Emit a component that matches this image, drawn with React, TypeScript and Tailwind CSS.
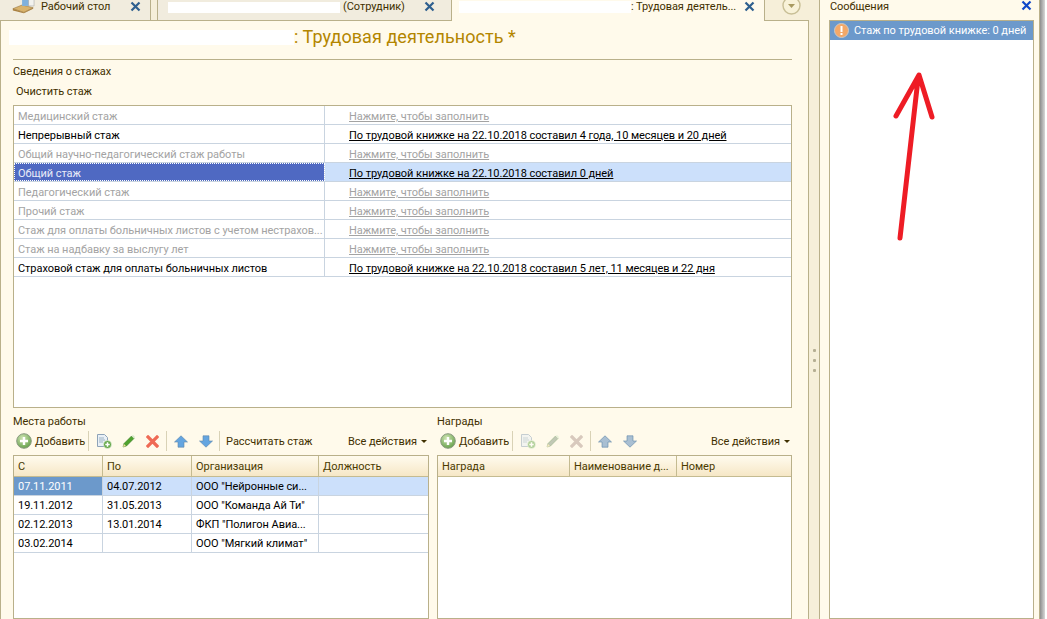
import React from "react";

const Plus = () => (
  <svg width="16" height="16" viewBox="0 0 16 16" className="shrink-0">
    <defs>
      <radialGradient id="pg" cx="0.4" cy="0.3" r="0.8">
        <stop offset="0" stopColor="#cfe5b4" />
        <stop offset="1" stopColor="#5c9a40" />
      </radialGradient>
    </defs>
    <circle cx="8" cy="8" r="7.3" fill="url(#pg)" stroke="#8a9a80" />
    <path d="M8 4v8M4 8h8" stroke="#fff" strokeWidth="2.4" />
  </svg>
);
const DocAdd = ({ o = 1 }: { o?: number }) => (
  <svg width="16" height="16" viewBox="0 0 16 16" opacity={o} className="shrink-0">
    <path d="M1.5 1.5h7l3 3v9h-10z" fill="#e9f0f6" stroke="#8ea3b8" />
    <path d="M3 5h5M3 7h6M3 9h4" stroke="#9db2c4" />
    <circle cx="11.5" cy="11.5" r="4" fill="#66a84a" stroke="#fff" strokeWidth="0.5" />
    <path d="M11.5 9.3v4.4M9.3 11.5h4.4" stroke="#fff" strokeWidth="1.5" />
  </svg>
);
const Pencil = ({ o = 1, c = "#4fa32e" }: { o?: number; c?: string }) => (
  <svg width="14" height="14" viewBox="0 0 14 14" opacity={o} className="shrink-0">
    <path d="M1 13l1-3.500L9.500 2 12 4.500 4.500 12z" fill={c} stroke="#2f6f1c" strokeWidth="0.5" />
    <path d="M9.500 2L12 4.500l1-1.500L11 1z" fill="#d7e8c8" />
    <path d="M1 13l1-3 2 2z" fill="#f4e0a0" />
  </svg>
);
const Cross = ({ o = 1, c = "#ef6a55" }: { o?: number; c?: string }) => (
  <svg width="13" height="13" viewBox="0 0 13 13" opacity={o} className="shrink-0">
    <path d="M2 2l9 9M11 2l-9 9" stroke={c} strokeWidth="3.2" strokeLinecap="square" />
  </svg>
);
const Up = ({ c = "#64a5e0" }: { c?: string }) => (
  <svg width="14" height="13" viewBox="0 0 14 13" className="shrink-0">
    <path d="M7 .8L13.500 7H10v5.200H4V7H.5z" fill={c} stroke="#5f87aa" strokeWidth="0.6" />
  </svg>
);
const Down = ({ c = "#64a5e0" }: { c?: string }) => (
  <svg width="14" height="13" viewBox="0 0 14 13" className="shrink-0">
    <path d="M7 12.200L13.500 6H10V.8H4V6H.5z" fill={c} stroke="#5f87aa" strokeWidth="0.6" />
  </svg>
);
const Close = ({ c = "#2e5f8e" }: { c?: string }) => (
  <svg width="11" height="11" viewBox="0 0 11 11" className="shrink-0 block">
    <path d="M1.500 1.500l8 8M9.500 1.500l-8 8" stroke={c} strokeWidth="2.2" />
  </svg>
);
const Sep = () => <div className="w-px h-[20px] bg-[#d9d2b6] shrink-0" />;

const rows: [string, string, boolean][] = [
  ["Медицинский стаж", "Нажмите, чтобы заполнить", false],
  ["Непрерывный стаж", "По трудовой книжке на 22.10.2018 составил 4 года, 10 месяцев и 20 дней", true],
  ["Общий научно-педагогический стаж работы", "Нажмите, чтобы заполнить", false],
  ["Общий стаж", "По трудовой книжке на 22.10.2018 составил 0 дней", true],
  ["Педагогический стаж", "Нажмите, чтобы заполнить", false],
  ["Прочий стаж", "Нажмите, чтобы заполнить", false],
  ["Стаж для оплаты больничных листов с учетом нестрахов...", "Нажмите, чтобы заполнить", false],
  ["Стаж на надбавку за выслугу лет", "Нажмите, чтобы заполнить", false],
  ["Страховой стаж для оплаты больничных листов", "По трудовой книжке на 22.10.2018 составил 5 лет, 11 месяцев и 22 дня", true],
];

const work = [
  ["07.11.2011", "04.07.2012", 'ООО "Нейронные си...'],
  ["19.11.2012", "31.05.2013", 'ООО "Команда Ай Ти"'],
  ["02.12.2013", "13.01.2014", 'ФКП "Полигон Авиа...'],
  ["03.02.2014", "", 'ООО "Мягкий климат"'],
];

const HeadCell = ({ w, children }: { w: string; children?: React.ReactNode }) => (
  <div className={`${w} h-full flex items-center pl-1 border-r border-[#c4bb91] last:border-r-0 text-[#4a3a00] truncate`}>
    {children}
  </div>
);

export default function App() {
  return (
    <div
      className="w-[1047px] h-[619px] overflow-hidden flex bg-[#f6efd9] text-[11px] leading-[13px] tracking-[-0.055px] text-[#3f3000]"
      style={{ fontFamily: "Roboto, 'Noto Sans', sans-serif" }}
    >
      <div className="w-[809px] shrink-0 flex flex-col">
        <div className="h-[21px] shrink-0 flex overflow-hidden">
          <div className="w-[151px] bg-[#f1ecde] border-r border-b border-[#b9b08a] flex items-start pl-[11px]">
            <svg width="24" height="18" viewBox="0 0 26 18" className="shrink-0 -mt-[4px]">
              <path d="M2 13l10-4 12 3-10 5z" fill="#d9b36c" stroke="#8f6f3a" strokeWidth="0.6" />
              <path d="M2 13v2l12 3 10-5v-1l-10 5z" fill="#a97f3f" />
              <path d="M12 1h10v9h-10z" fill="#7fb1dd" />
              <path d="M19 0h6v10h-6z" fill="#f2f2ee" stroke="#999" strokeWidth="0.5" />
            </svg>
            <span className="ml-[6px]">Рабочий стол</span>
            <span className="ml-[20px] mt-[1px]"><Close /></span>
          </div>
          <div className="w-[6px] border-b border-[#b9b08a]" />
          <div className="w-[295px] bg-[#f1ecde] border-l border-r border-b border-[#b9b08a] flex items-start pl-[10px]">
            <div className="w-[172px] h-[11px] mt-[2px] bg-white shrink-0" />
            <span className="ml-[3px]">(Сотрудник)</span>
            <span className="ml-[19px] mt-[1px]"><Close /></span>
          </div>
          <div className="w-[313px] bg-[#fffaeb] flex items-start pl-[7px] border-r border-[#b9b08a]">
            <div className="w-[172px] h-[12px] mt-[1px] bg-white shrink-0" />
            <span>: Трудовая деятель...</span>
            <span className="ml-[8px] mt-[1px]"><Close /></span>
          </div>
          <div className="flex-1 border-b border-[#b9b08a] flex items-start pl-[17px]">
            <svg width="19" height="19" viewBox="0 0 19 19" className="-mt-[4px]">
              <circle cx="9.500" cy="9.500" r="8.500" fill="#f8f2d8" stroke="#c8bf96" strokeWidth="1.4" />
              <path d="M6 8h7l-3.500 4z" fill="#a89a60" />
            </svg>
          </div>
        </div>

        <div className="flex-1 min-h-0 bg-[#fffaeb] border-l border-r border-[#b9b08a] pl-[12px] pr-[16px] flex flex-col">
          <div className="h-[33px] mb-[5px] shrink-0 flex items-center -ml-[4px]">
            <div className="w-[285px] h-[15px] bg-white shrink-0" />
            <span className="text-[18px] leading-[20px] mb-[2px] text-[#b38600] tracking-[0.05px]">: Трудовая деятельность *</span>
          </div>
          <div className="h-px bg-[#b9b08a] shrink-0" />
          <div className="mt-[5px] h-[13px] shrink-0">Сведения о стажах</div>
          <div className="mt-[7px] h-[13px] pl-[3px] shrink-0">Очистить стаж</div>
          <div className="mt-[7px] h-[303px] shrink-0 bg-white border border-[#b9b08a]">
            {rows.map(([a, b, on], i) => (
              <div
                key={a}
                className={`h-[19px] flex border-b border-[#c9d4e0] items-center ${i === 3 ? "bg-[#cce0fb]" : ""}`}
              >
                <div
                  className={`w-[311px] h-full shrink-0 flex items-center pl-[4px] pt-[2px] border-r border-[#c9d4e0] truncate ${
                    i === 3
                      ? "bg-[#4f69c2] text-[#e8ecf8] outline-dotted outline-1 -outline-offset-1 outline-white"
                      : on
                        ? "text-black"
                        : "text-[#a3a3a3]"
                  }`}
                >
                  {a}
                </div>
                <div className={`pl-[24px] pt-[2px] underline ${on ? "text-black" : "text-[#a3a3a3]"}`}>{b}</div>
              </div>
            ))}
          </div>

          <div className="mt-[7px] flex gap-[8px] flex-1 min-h-0">
            <div className="w-[416px] shrink-0 flex flex-col">
              <div className="h-[13px] shrink-0">Места работы</div>
              <div className="h-[20px] mt-[3px] shrink-0 flex items-center pl-[3px]">
                <Plus />
                <span className="ml-[3px]">Добавить</span>
                <span className="ml-[3px]"><Sep /></span>
                <span className="ml-[7px]"><DocAdd /></span>
                <span className="ml-[10px]"><Pencil /></span>
                <span className="ml-[10px]"><Cross /></span>
                <span className="ml-[7px]"><Sep /></span>
                <span className="ml-[7px]"><Up /></span>
                <span className="ml-[11px]"><Down /></span>
                <span className="ml-[6px]"><Sep /></span>
                <span className="ml-[6px]">Рассчитать стаж</span>
                <span className="ml-auto">Все действия</span>
                <span className="ml-[4px] mr-[2px] w-0 h-0 border-x-[3px] border-x-transparent border-t-[3px] border-t-[#3f3000]" />
              </div>
              <div className="mt-[4px] flex-1 bg-white border border-[#b9b08a] min-h-0">
                <div className="h-[21px] flex border-b border-[#c4bb91] bg-gradient-to-b from-[#fffbee] to-[#f6e7c6]">
                  <HeadCell w="w-[89px]">С</HeadCell>
                  <HeadCell w="w-[89px]">По</HeadCell>
                  <HeadCell w="w-[127px]">Организация</HeadCell>
                  <HeadCell w="flex-1">Должность</HeadCell>
                </div>
                {work.map((r, i) => (
                  <div key={r[0]} className={`h-[19px] flex border-b border-[#c9d4e0] ${i === 0 ? "bg-[#cce0fb]" : ""}`}>
                    <div className={`w-[89px] pl-[4px] flex items-center border-r border-[#c9d4e0] ${i === 0 ? "bg-[#6c99cb] text-white" : "text-black"}`}>{r[0]}</div>
                    <div className="w-[89px] pl-[4px] flex items-center border-r border-[#c9d4e0] text-black">{r[1]}</div>
                    <div className="w-[127px] pl-[4px] flex items-center border-r border-[#c9d4e0] text-black truncate">{r[2]}</div>
                    <div className="flex-1" />
                  </div>
                ))}
              </div>
            </div>

            <div className="flex-1 flex flex-col min-w-0">
              <div className="h-[13px] shrink-0">Награды</div>
              <div className="h-[20px] mt-[3px] shrink-0 flex items-center pl-[3px]">
                <Plus />
                <span className="ml-[3px]">Добавить</span>
                <span className="ml-[3px]"><Sep /></span>
                <span className="ml-[7px]"><DocAdd o={0.5} /></span>
                <span className="ml-[10px]"><Pencil o={0.55} c="#8fa08a" /></span>
                <span className="ml-[10px]"><Cross c="#d8c9bd" /></span>
                <span className="ml-[7px]"><Sep /></span>
                <span className="ml-[7px]"><Up c="#a9bfd2" /></span>
                <span className="ml-[11px]"><Down c="#a9bfd2" /></span>
                <span className="ml-auto">Все действия</span>
                <span className="ml-[4px] mr-[2px] w-0 h-0 border-x-[3px] border-x-transparent border-t-[3px] border-t-[#3f3000]" />
              </div>
              <div className="mt-[4px] flex-1 bg-white border border-[#b9b08a] min-h-0">
                <div className="h-[21px] flex border-b border-[#c4bb91] bg-gradient-to-b from-[#fffbee] to-[#f6e7c6]">
                  <HeadCell w="w-[132px]">Награда</HeadCell>
                  <HeadCell w="w-[107px]">Наименование д...</HeadCell>
                  <HeadCell w="flex-1">Номер</HeadCell>
                </div>
              </div>
            </div>
          </div>
        </div>
      </div>

      <div className="w-[10px] shrink-0 flex flex-col items-center gap-[7px] pt-[349px]">
        <div className="w-[3px] h-[3px] rounded-[1px] bg-[#b5ae92]" />
        <div className="w-[3px] h-[3px] rounded-[1px] bg-[#b5ae92]" />
        <div className="w-[3px] h-[3px] rounded-[1px] bg-[#b5ae92]" />
      </div>

      <div className="w-[221px] shrink-0 bg-[#fffaeb] border-l border-r border-[#b9b08a] flex flex-col pl-[9px] pr-[5px]">
        <div className="h-[20px] shrink-0 flex items-start justify-between pl-px">
          <span>Сообщения</span>
          <span className="mr-[2px]"><Close c="#1048c8" /></span>
        </div>
        <div className="flex-1 bg-white border border-[#b9b08a] relative">
          <div className="h-[19px] bg-[#6c99cb] flex items-center pl-[4px] text-white">
            <svg width="15" height="15" viewBox="0 0 15 15" className="shrink-0">
              <circle cx="7.500" cy="7.500" r="7" fill="#f4a868" stroke="#c9c9c9" />
              <rect x="6.500" y="3" width="2" height="6" fill="#fff" />
              <rect x="6.500" y="10" width="2" height="2" fill="#fff" />
            </svg>
            <span className="ml-[5px]">Стаж по трудовой книжке: 0 дней</span>
          </div>
          <svg width="60" height="180" viewBox="0 0 60 180" className="absolute left-[60px] top-[50px]">
            <path d="M10 167L28 8M6 45L29 4L42 46" fill="none" stroke="#ee1c25" strokeWidth="5" strokeLinecap="round" strokeLinejoin="round" />
          </svg>
        </div>
      </div>
      <div className="w-[5px] shrink-0 bg-gradient-to-r from-[#8e8e8e] to-[#d8d8d8]" />
      <div className="flex-1 bg-white" />
    </div>
  );
}
